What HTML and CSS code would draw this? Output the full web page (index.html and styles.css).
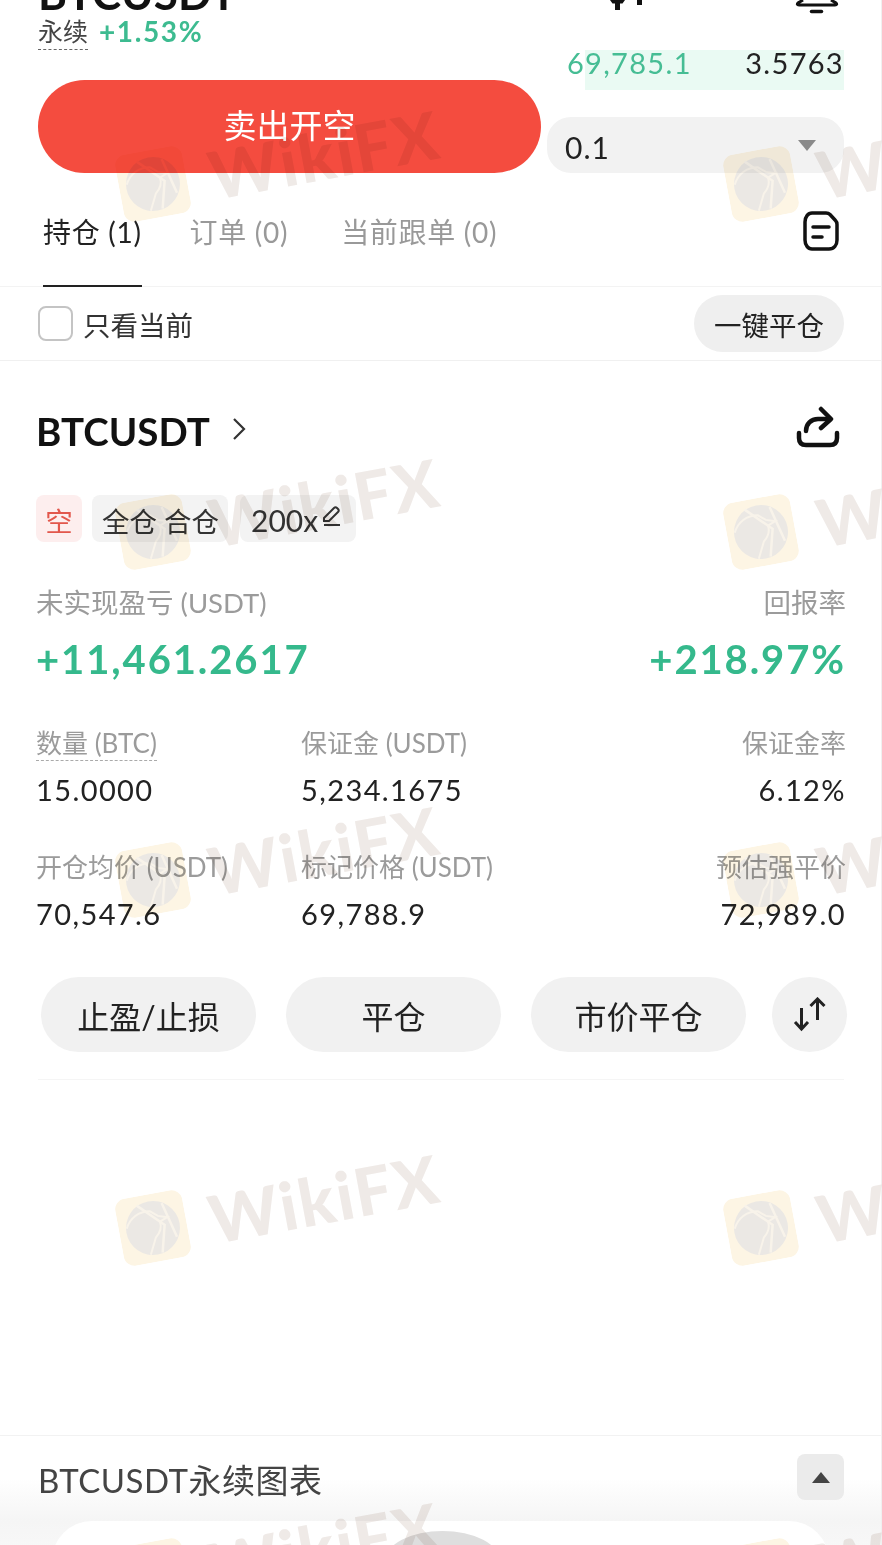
FILE: index.html
```html
<!DOCTYPE html>
<html lang="zh-CN">
<head>
    <meta charset="UTF-8">
    <title>BTCUSDT 永续</title>
    <meta name="viewport" content="width=device-width, initial-scale=1.0">
    <link rel="stylesheet" href="styles.css">
</head>
<body>
    <svg class="defs" width="0" height="0">
        <symbol id="eagle" viewBox="0 0 68 68">
            <rect width="68" height="68" rx="11" fill="#fdf5e4"/>
            <circle cx="34" cy="34" r="27" fill="#ebe8e4"/>
            <path d="M22 9l24 24-7 27M47 11l9 36" stroke="#f8f3ea" stroke-width="2.500" fill="none"/>
            <path d="M8 30c5-10 15-15 26-13l7 6 9 3-8 3c1 6-2 11-7 15L27 60" stroke="#f8f3ea" stroke-width="2" fill="none"/>
        </symbol>
    </svg>

    <div class="page">
        <!-- top of the screen, cut off by the screenshot -->
        <div class="top-row">
            <span class="symbol-cut">BTCUSDT</span>
            <div class="top-icons">
                <svg width="34" height="16" viewBox="0 0 34 16">
                    <path d="M0 0h15l-2.500 3.500H10V10H5V3.500H2.500zM27 0h5v5h-5z" fill="#111"/>
                </svg>
                <svg width="44" height="16" viewBox="0 0 44 16">
                    <path d="M8 0L3 3c-1 1-1 2 1 2h36c2 0 2-1 1-2l-5-3" stroke="#111" stroke-width="3" fill="none"/>
                    <path d="M16.500 11.500h10" stroke="#111" stroke-width="3.500" stroke-linecap="round"/>
                </svg>
            </div>
        </div>

        <div class="trade">
            <div class="trade-left">
                <div class="market">
                    <span class="dashed">永续</span>
                    <span class="green">+1.53%</span>
                </div>
                <button class="sell-btn">卖出开空</button>
            </div>
            <div class="trade-right">
                <div class="book-row">
                    <span class="book-bar"></span>
                    <span class="book-price">69,785.1</span>
                    <span class="book-qty">3.5763</span>
                </div>
                <div class="qty-select">
                    <span>0.1</span>
                    <i class="caret"></i>
                </div>
            </div>
        </div>

        <div class="tabs">
            <a class="tab active">持仓 (1)</a>
            <a class="tab">订单 (0)</a>
            <a class="tab">当前跟单 (0)</a>
            <svg class="tab-icon" width="36" height="40" viewBox="0 0 36 40">
                <path d="M9 2h14c2 0 3 .500 4 1.500l5.500 6c1 1 1.500 2.500 1.500 4V29c0 5-3 9-8 9H9c-4 0-7-4-7-9V11c0-5 3-9 7-9z" stroke="#111" stroke-width="3.500" fill="none"/>
                <path d="M10 16h16M10 26h9" stroke="#111" stroke-width="3.500" stroke-linecap="round"/>
            </svg>
        </div>

        <div class="filter">
            <label class="check"><i class="box"></i>只看当前</label>
            <button class="pill-sm">一键平仓</button>
        </div>

        <div class="position">
            <div class="pos-head">
                <span class="pos-name">BTCUSDT</span>
                <svg class="chevron" width="16" height="26" viewBox="0 0 16 26">
                    <path d="M3 3l10 10L3 23" stroke="#333" stroke-width="2.200" fill="none"/>
                </svg>
                <svg class="share" width="44" height="42" viewBox="0 0 44 42">
                    <path d="M10 25c0-7 5-12 12-12h11" stroke="#111" stroke-width="4.500" fill="none" stroke-linecap="round"/>
                    <path d="M25 3l10 10-10 9" stroke="#111" stroke-width="4.500" fill="none" stroke-linecap="round" stroke-linejoin="round"/>
                    <path d="M3 27v5c0 5 3 7 7 7h24c4 0 7-2 7-7v-5" stroke="#111" stroke-width="4.500" fill="none" stroke-linecap="round"/>
                </svg>
            </div>

            <div class="tags">
                <span class="tag tag-red">空</span>
                <span class="tag tag-mode">全仓 合仓</span>
                <span class="tag tag-lev">200x
                    <svg width="20" height="24" viewBox="0 0 20 24">
                        <path d="M2 14L12 4c1-1 2-1 3 0l1 1c1 1 1 2 0 3L7 17H2zM2 21h16" stroke="#333" stroke-width="2" fill="none"/>
                    </svg>
                </span>
            </div>

            <div class="pnl">
                <div>
                    <div class="label pnl-label">未实现盈亏 (USDT)</div>
                    <div class="pnl-value">+11,461.2617</div>
                </div>
                <div class="right">
                    <div class="label pnl-label">回报率</div>
                    <div class="pnl-value">+218.97%</div>
                </div>
            </div>

            <div class="stats">
                <div class="stat">
                    <div class="label"><span class="dashed-long">数量 (BTC)</span></div>
                    <div class="value">15.0000</div>
                </div>
                <div class="stat">
                    <div class="label">保证金 (USDT)</div>
                    <div class="value">5,234.1675</div>
                </div>
                <div class="stat right">
                    <div class="label">保证金率</div>
                    <div class="value">6.12%</div>
                </div>
                <div class="stat">
                    <div class="label">开仓均价 (USDT)</div>
                    <div class="value">70,547.6</div>
                </div>
                <div class="stat">
                    <div class="label">标记价格 (USDT)</div>
                    <div class="value">69,788.9</div>
                </div>
                <div class="stat right">
                    <div class="label">预估强平价</div>
                    <div class="value">72,989.0</div>
                </div>
            </div>

            <div class="actions">
                <button class="pill">止盈/止损</button>
                <button class="pill">平仓</button>
                <button class="pill">市价平仓</button>
                <button class="pill-round">
                    <svg width="34" height="36" viewBox="0 0 34 36">
                        <path d="M8.500 11v21M2 25l6.500 7 6.500-7M24.500 23V2M17.500 9l7-7 7 7" stroke="#222" stroke-width="3" fill="none"/>
                    </svg>
                </button>
            </div>
        </div>

        <div class="chart-head">
            <span class="chart-title">BTCUSDT永续图表</span>
            <button class="chart-toggle"><i class="caret-up"></i></button>
        </div>
        <div class="chart-wrap">
            <div class="chart-card">
                <span class="chart-knob"></span>
            </div>
        </div>
    </div>

    <!-- watermark over everything -->
    <div class="marks">
        <div class="mark"><svg class="mark-logo"><use href="#eagle"/></svg><span>WikiFX</span></div>
        <div class="mark"><svg class="mark-logo"><use href="#eagle"/></svg><span>WikiFX</span></div>
        <div class="mark"><svg class="mark-logo"><use href="#eagle"/></svg><span>WikiFX</span></div>
        <div class="mark"><svg class="mark-logo"><use href="#eagle"/></svg><span>WikiFX</span></div>
        <div class="mark"><svg class="mark-logo"><use href="#eagle"/></svg><span>WikiFX</span></div>
        <div class="mark"><svg class="mark-logo"><use href="#eagle"/></svg><span>WikiFX</span></div>
        <div class="mark"><svg class="mark-logo"><use href="#eagle"/></svg><span>WikiFX</span></div>
        <div class="mark"><svg class="mark-logo"><use href="#eagle"/></svg><span>WikiFX</span></div>
        <div class="mark"><svg class="mark-logo"><use href="#eagle"/></svg><span>WikiFX</span></div>
        <div class="mark"><svg class="mark-logo"><use href="#eagle"/></svg><span>WikiFX</span></div>
    </div>
</body>
</html>
```

FILE: styles.css
```css
html, body {
    margin: 0;
    padding: 0;
    height: 1545px;
    overflow: hidden;
}
body {
    position: relative;
    background: #fff;
    color: #222;
    font-family: Lato, "Noto Sans CJK SC", sans-serif;
}
button {
    font-family: inherit;
    border: none;
    padding: 0;
    color: #222;
}
.defs {
    position: absolute;
}
.page {
    height: 1545px;
    border-right: 1px solid #f0f0f0;
    overflow: hidden;
}

/* top */
.top-row {
    height: 16px;
    padding: 0 42px 0 38px;
    display: flex;
    justify-content: space-between;
    overflow: hidden;
}
.symbol-cut {
    font-size: 44px;
    font-weight: 700;
    line-height: 38px;
    margin-top: -26px;
    color: #111;
}
.top-icons {
    display: flex;
    gap: 151px;
}

/* trade area */
.trade {
    display: flex;
    padding: 0 37px 0 38px;
    height: 157px;
}
.trade-left {
    width: 503px;
}
.market {
    height: 64px;
    display: flex;
    align-items: flex-start;
    gap: 11px;
    margin-top: -2px;
    margin-bottom: 2px;
    font-size: 25px;
    line-height: 34px;
}
.dashed {
    color: #444;
    height: 35px;
    border-bottom: 1px dashed #666;
}
.green {
    color: #3dbb90;
    font-weight: 700;
    font-size: 28px;
    letter-spacing: 1.600px;
}
.sell-btn {
    width: 503px;
    height: 93px;
    padding-bottom: 6px;
    border-radius: 47px;
    background: #f44c3f;
    color: #fff;
    font-size: 33px;
}
.trade-right {
    margin-left: 6px;
    width: 297px;
}
.book-row {
    position: relative;
    height: 58px;
    margin-top: 34px;
    margin-left: 20px;
    display: flex;
    justify-content: space-between;
    font-size: 29px;
    line-height: 26px;
    letter-spacing: 1.300px;
}
.book-bar {
    position: absolute;
    left: 18px;
    right: 0;
    top: 0;
    height: 40px;
    background: #eafaf3;
}
.book-price {
    position: relative;
    color: #46bd94;
}
.book-qty {
    position: relative;
    color: #222;
}
.qty-select {
    margin-top: 9px;
    height: 56px;
    background: #f2f2f2;
    border-radius: 24px;
    position: relative;
    padding: 12px 18px 0;
    box-sizing: border-box;
    font-size: 30px;
    line-height: 36px;
    letter-spacing: 1px;
}
.caret {
    position: absolute;
    right: 28px;
    top: 23px;
    border-left: 9px solid transparent;
    border-right: 9px solid transparent;
    border-top: 11px solid #8a8a8a;
}

/* tabs */
.tabs {
    height: 114px;
    box-sizing: border-box;
    padding: 0 42px 0 43px;
    display: flex;
    gap: 48px;
    border-bottom: 1px solid #f3f3f3;
}
.tab {
    color: #999;
    font-size: 28px;
    line-height: 36px;
    padding-top: 41px;
    height: 72px;
    letter-spacing: 0.700px;
}
.tab + .tab + .tab {
    margin-left: 5px;
}
.tab.active {
    color: #222;
    border-bottom: 2px solid #222;
    height: 71px;
}
.tab-icon {
    margin-left: auto;
    margin-top: 38px;
}

/* filter row */
.filter {
    height: 74px;
    box-sizing: border-box;
    padding: 0 37px 0 38px;
    display: flex;
    align-items: center;
    justify-content: space-between;
    border-bottom: 1px solid #f0f0f0;
}
.check {
    display: flex;
    align-items: center;
    gap: 10px;
    font-size: 27.500px;
    color: #333;
}
.box {
    width: 31px;
    height: 31px;
    border: 2.500px solid #c4c4c4;
    border-radius: 8px;
}
.pill-sm {
    width: 150px;
    height: 57px;
    border-radius: 29px;
    background: #efefef;
    font-size: 27.500px;
}

/* position card */
.position {
    padding: 0 35px 0 36px;
}
.pos-head {
    height: 134px;
    display: flex;
    align-items: center;
}
.pos-name {
    font-size: 38.500px;
    font-weight: 700;
    color: #111;
    margin-top: 6px;
}
.chevron {
    margin-left: 21px;
    margin-top: 2px;
}
.share {
    margin-left: auto;
    margin-top: -2px;
    margin-right: 6px;
}
.tags {
    display: flex;
    gap: 10px;
    height: 47px;
}
.tag {
    display: flex;
    align-items: center;
    padding: 3px 10px 0;
    background: #f3f3f3;
    border-radius: 8px;
    font-size: 27.500px;
    color: #333;
    white-space: nowrap;
}
.tag-red {
    background: #fdeeee;
    color: #e2574c;
    width: 46px;
    box-sizing: border-box;
    justify-content: center;
    padding: 3px 0 0;
}
.tag-mode {
    width: 136px;
    box-sizing: border-box;
}
.tag-lev {
    width: 116px;
    box-sizing: border-box;
    gap: 4px;
    padding: 3px 0 0 11px;
    margin-left: 2px;
    font-size: 30px;
}
.tag-lev svg {
    margin-top: -8px;
}
.pnl {
    display: flex;
    justify-content: space-between;
    margin-top: 41px;
}
.label {
    color: #9b9b9b;
    font-size: 26px;
    line-height: 40px;
    white-space: nowrap;
}
.pnl-label {
    font-size: 27.500px;
}
.pnl-value {
    margin-top: 14px;
    color: #35b98c;
    font-size: 40px;
    font-weight: 700;
    line-height: 44px;
    letter-spacing: 1.900px;
}
.right {
    text-align: right;
}
.stats {
    margin-top: 42px;
    display: grid;
    grid-template-columns: 265px 1fr auto;
    row-gap: 37px;
}
.dashed-long {
    border-bottom: 1px dashed #aaa;
    padding-bottom: 1px;
}
.value {
    margin-top: 7px;
    font-size: 29px;
    line-height: 40px;
    letter-spacing: 1.400px;
    color: #222;
}
.actions {
    margin: 43px 2px 0 2px;
    padding: 0 0 27px 3px;
    display: flex;
    gap: 30px;
    border-bottom: 1px solid #f5f5f5;
    height: 75px;
}
.pill {
    width: 215px;
    height: 75px;
    flex: none;
    border-radius: 38px;
    background: #f1f1f1;
    font-size: 32px;
}
.pill-round {
    width: 75px;
    height: 75px;
    flex: none;
    margin-left: -4px;
    border-radius: 50%;
    background: #f1f1f1;
    display: flex;
    align-items: center;
    justify-content: center;
}

/* chart */
.chart-head {
    margin-top: 355px;
    height: 86px;
    border-top: 1px solid #f2f2f2;
    padding: 18px 37px 0 38px;
    box-sizing: border-box;
    display: flex;
    justify-content: space-between;
    background: linear-gradient(#fff 50%, #f5f5f5);
}
.chart-title {
    font-size: 33px;
    line-height: 52px;
    letter-spacing: 0.500px;
    color: #444;
}
.chart-toggle {
    width: 47px;
    height: 46px;
    background: #ebebeb;
    border-radius: 8px;
    display: flex;
    align-items: center;
    justify-content: center;
}
.caret-up {
    border-left: 9px solid transparent;
    border-right: 9px solid transparent;
    border-bottom: 11px solid #444;
}
.chart-wrap {
    padding: 0 52px;
    background: linear-gradient(#f5f5f5, #fbfbfb);
}
.chart-card {
    position: relative;
    height: 60px;
    background: #fff;
    border-radius: 40px 40px 0 0;
}
.chart-knob {
    position: absolute;
    left: 333px;
    top: 10px;
    width: 115px;
    height: 60px;
    border-radius: 50%;
    background: #dedede;
}

/* watermark */
.marks {
    position: absolute;
    inset: 0;
    padding: 144px 0 0 119px;
    box-sizing: border-box;
    display: grid;
    grid-template-columns: 608px 608px;
    grid-auto-rows: 348px;
    overflow: hidden;
    pointer-events: none;
}
.mark {
    display: flex;
    align-items: center;
    width: 340px;
    height: 80px;
    transform: rotate(-10.500deg);
    transform-origin: 34px 50%;
    mix-blend-mode: multiply;
}
.mark-logo {
    width: 68px;
    height: 68px;
    flex: none;
}
.mark span {
    margin: 3px 0 0 23px;
    font-family: Lato, sans-serif;
    font-size: 66px;
    font-weight: 900;
    line-height: 80px;
    letter-spacing: 2px;
    color: #efeae7;
}
```
